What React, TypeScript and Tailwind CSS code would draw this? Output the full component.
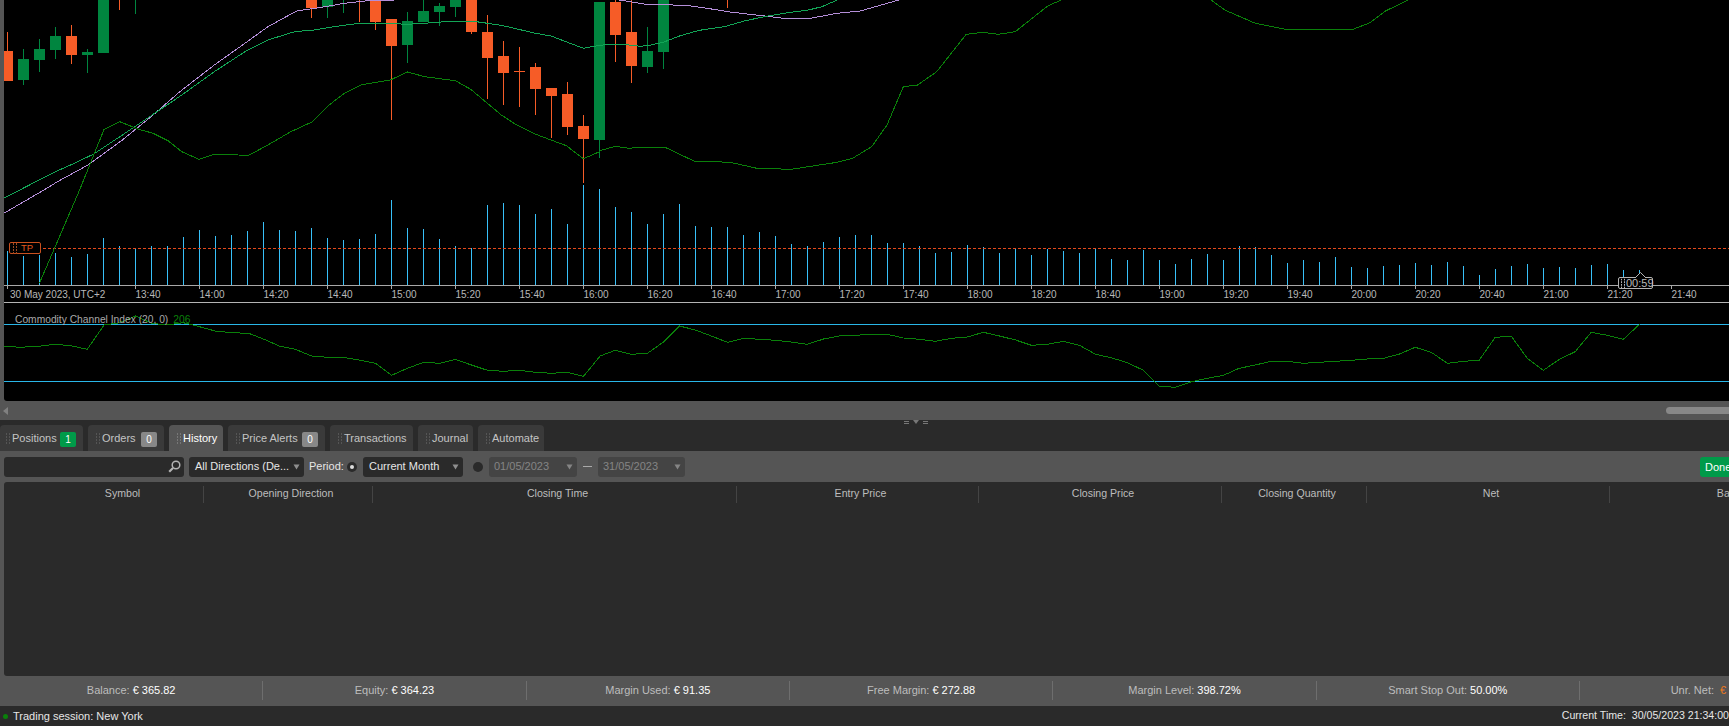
// cTrader style chart + history panel
const SX = 1568 / 600;

// traced from the picture: [x, y] in crop coordinates, converted to page px
const trace = (offX: number, offY: number, pts: number[][]) =>
  pts.map(([x, y]) => `${(offX + x / SX).toFixed(1)},${(offY + y / 3).toFixed(1)}`).join(' ');

const maMid = [
  trace(0, 0, [[10,595],[60,565],[145,515],[190,492],[245,462],[320,405],[385,355],[475,285],[560,215],[640,155],[700,120],[770,95],[820,90],[885,78],[940,70],[1005,70],[1065,73],[1130,68],[1175,64],[1245,65],[1310,76],[1400,100],[1440,108],[1490,130],[1525,145],[1567,136]]),
  trace(600, 0, [[0,136],[25,133],[60,133],[105,139],[130,136],[165,127],[210,107],[260,91],[325,80],[380,62],[430,50],[480,40],[545,30],[580,20],[620,0]]),
].join(' ');

const maFast = [
  trace(0, 190, [[10,70],[115,0]]),
  trace(0, 0, [[150,545],[230,495],[320,420],[400,345],[470,275],[560,195],[640,130],[700,80],[775,33],[840,22],[900,10],[960,2],[1030,0],[1260,-12]]),
  trace(600, 0, [[50,0],[80,5],[120,13],[190,15],[220,15],[280,25],[340,36],[430,48],[480,55],[550,55],[620,40],[680,33],[720,20],[780,0]]),
].join(' ');

const band = [
  trace(0, 190, [[103,280],[208,0]]),
  trace(0, 0, [[272,388],[313,365],[360,387],[400,400],[440,423],[475,455],[520,478],[560,463],[650,466],[700,435],[760,395],[815,366],[860,315],[900,280],[945,254],[1020,240],[1065,216],[1110,230],[1190,242],[1230,268],[1310,345],[1350,375],[1400,403],[1480,437],[1525,476],[1567,455]]),
  trace(600, 0, [[0,452],[40,439],[75,445],[105,442],[170,442],[245,483],[340,487],[410,505],[500,508],[620,487],[660,475],[710,440],[750,375],[793,260],[830,255],[880,215],[957,103],[1000,97],[1040,103],[1085,95],[1170,18],[1205,0],[1230,-15]]),
].join(' ');

const bandEnd = trace(1129, 0, [[190,-15],[215,0],[250,30],[330,70],[410,88],[585,88],[630,68],[670,33],[730,0],[760,-12]]);

const cci = [
  trace(0, 190, [[10,468],[50,472],[100,469],[145,463],[185,467],[228,478],[272,405],[313,398],[354,378],[396,400],[437,405],[479,398],[521,410],[562,423],[605,428],[650,430],[690,448],[730,468],[772,478],[814,498],[855,502],[897,502],[939,510],[981,520],[1023,556],[1065,535],[1107,517],[1149,520],[1190,508],[1232,525],[1274,541],[1316,544],[1358,541],[1399,547],[1441,550],[1483,547],[1525,559],[1567,500]]),
  trace(600, 190, [[0,498],[40,481],[82,493],[124,490],[166,456],[208,408],[249,420],[291,438],[333,457],[375,445],[417,448],[458,451],[500,456],[542,463],[584,447],[626,438],[668,436],[710,433],[751,433],[793,444],[835,448],[877,454],[918,445],[960,441],[1002,427],[1044,438],[1086,450],[1127,466],[1169,463],[1211,454],[1253,466],[1295,493],[1336,503],[1378,518],[1420,541],[1462,589]]),
  trace(1129, 190, [[79,589],[121,592],[163,575],[205,565],[247,556],[288,535],[330,525],[372,514],[414,514],[456,520],[498,517],[539,514],[581,511],[623,507],[665,505],[707,492],[748,472],[790,487],[832,520],[874,514],[915,511],[957,442],[999,439],[1041,505],[1083,541],[1125,508],[1166,485],[1208,427],[1250,436],[1292,448],[1334,403]]),
].join(' ');

// i, up?, body top, body bottom, wick top, wick bottom
const candles: [number, boolean, number, number, number, number][] = [
  [0, false, 51, 81, 32, 81],
  [1, true, 59, 80, 49, 85],
  [2, true, 49, 60, 39, 72],
  [3, true, 36, 50, 27, 59],
  [4, false, 36, 55, 25, 64],
  [5, true, 52, 55, 49, 73],
  [6, true, -5, 53, -5, 53],
  [7, false, -20, -10, -5, 10],
  [8, true, -20, -10, -5, 14],
  [19, false, -5, 8, -5, 18],
  [20, true, -5, 7, -5, 18],
  [21, true, -20, -10, -5, 13],
  [22, false, -20, -10, -5, 22],
  [23, false, -5, 22, -5, 30],
  [24, false, 19, 46, 19, 120],
  [25, true, 21, 45, 12, 63],
  [26, true, 11, 22, -5, 22],
  [27, true, 6, 12, 3, 26],
  [28, true, -5, 7, -5, 17],
  [29, false, -5, 32, -5, 34],
  [30, false, 32, 58, 15, 99],
  [31, false, 56, 73, 41, 105],
  [32, false, 71, 72, 47, 107],
  [33, false, 67, 89, 63, 115],
  [34, false, 88, 96, 88, 138],
  [35, false, 94, 127, 82, 135],
  [36, false, 126, 139, 115, 183],
  [37, true, 2, 140, 2, 158],
  [38, false, 2, 35, -5, 62],
  [39, false, 32, 66, -5, 83],
  [40, true, 51, 67, 27, 73],
  [41, true, -5, 52, -5, 69],
  [45, false, -20, -10, -5, 8],
];

// volume bar tops, 3x px above y=190
const volumes = [183,198,195,190,201,192,144,168,175,168,168,141,120,138,135,123,96,120,123,114,144,150,147,132,30,114,117,147,168,175,45,39,45,72,57,102,-15,-3,51,66,102,72,42,108,111,111,135,126,138,162,168,156,141,135,135,159,159,168,189,186,165,171,189,175,195,177,183,189,175,207,210,180,210,222,207,192,210,168,171,195,219,210,216,201,231,234,228,225,219,225,216,228,255,237,228,222,234,231,234,225,222,240,240];

const hours = ['13:40','14:00','14:20','14:40','15:00','15:20','15:40','16:00','16:20','16:40','17:00','17:20','17:40','18:00','18:20','18:40','19:00','19:20','19:40','20:00','20:20','20:40','21:00','21:20','21:40'];

function Grip({ color = '#5f5f5f', className = '' }: { color?: string; className?: string }) {
  return (
    <svg width="4" height="11" viewBox="0 0 4 11" className={`shrink-0 ${className}`}>
      {[0, 1, 2, 3].map(r => (
        <g key={r} fill={color}>
          <rect x="0" y={r * 3} width="1" height="2" />
          <rect x="3" y={r * 3} width="1" height="2" />
        </g>
      ))}
    </svg>
  );
}

function Chart() {
  return (
    <svg viewBox="4 0 1725 401" width="1725" height="401" className="block">
      {/* CCI levels */}
      <g shapeRendering="crispEdges">
        <rect x="4" y="324" width="1725" height="1" fill="#29b6e8" />
        <rect x="4" y="381" width="1725" height="1" fill="#29b6e8" />
        {volumes.map((top, i) => (
          <rect key={i} x={7 + i * 16} y={190 + top / 3} width="1" height={285 - (190 + top / 3)} fill="#38c0f8" />
        ))}
        <line x1="43" y1="248.5" x2="1729" y2="248.5" stroke="#e2491c" strokeDasharray="3 2" />
        {candles.map(([i, up, top, bottom, wt, wb]) => {
          const x = 7 + i * 16;
          const fill = up ? '#00853f' : '#f65c27';
          return (
            <g key={i} fill={fill}>
              <rect x={x} y={wt} width="1" height={wb - wt} />
              <rect x={x - 5} y={top} width="11" height={bottom - top} />
            </g>
          );
        })}
        <polyline points={maFast} fill="none" stroke="#b48ed8" />
        <polyline points={maMid} fill="none" stroke="#12a556" />
        <polyline points={band} fill="none" stroke="#0a800a" />
        <polyline points={bandEnd} fill="none" stroke="#0a800a" />
        <polyline points={cci} fill="none" stroke="#0a800a" />
        {/* time axis */}
        <rect x="4" y="285" width="1725" height="1" fill="#a8a8a8" />
        <rect x="4" y="302" width="1725" height="1" fill="#b4b4b4" />
        <rect x="7" y="285" width="1" height="4" fill="#a8a8a8" />
        {hours.map((_, i) => (
          <rect key={i} x={135 + i * 64} y="285" width="1" height="4" fill="#a8a8a8" />
        ))}
      </g>
      <g fontSize="10" fill="#b8b8b8">
        <text x="10" y="298">30 May 2023, UTC+2</text>
        {hours.map((h, i) => (
          <text key={h} x={135.5 + i * 64} y="298">{h}</text>
        ))}
      </g>
    </svg>
  );
}

function ChartOverlays() {
  return (
    <>
      <div className="absolute left-[5px] top-[242px] w-[32px] h-[12px] flex items-center gap-[4px] pl-[3px] border border-[#c9501f] rounded-[2px] text-[9.5px] leading-none text-[#e2591f]">
        <Grip color="#a04a20" />
        <span>TP</span>
      </div>
      <div className="absolute left-[11px] top-[313px] flex gap-[5px] text-[10.25px] leading-[14px] text-[#a8a8a8] whitespace-nowrap">
        <span>Commodity Channel Index (20, 0)</span>
        <span className="text-[#0a800a]">206</span>
      </div>
      <div className="absolute left-[1614px] top-[277px] w-[35px] h-[12px] flex items-center gap-[1px] pl-[2px] bg-black border border-[#b4b4b4] rounded-[2px] text-[11px] leading-none text-[#b8b8b8]">
        <Grip color="#b4b4b4" className="scale-y-90" />
        <span>00:59</span>
        <svg width="11" height="6" viewBox="0 0 11 6" className="absolute left-[16px] -top-[6px]">
          <path d="M0 6 L5.5 0.5 L11 6" fill="#000" stroke="#b4b4b4" />
        </svg>
      </div>
    </>
  );
}

function Tab({ label, badge, badgeClass, active, className = 'pl-[8px]' }: { label: string; badge?: string; badgeClass?: string; active?: boolean; className?: string }) {
  return (
    <div className={`h-[26px] shrink-0 flex items-center rounded-t-[4px] ${active ? 'bg-[#555] text-white' : 'bg-[#3a3a3a] text-[#c4c4c4]'} ${className}`}>
      <Grip color={active ? '#777' : '#555'} className="mr-[2px]" />
      <span className="whitespace-nowrap">{label}</span>
      {badge && (
        <span className={`ml-auto mr-[7px] w-[16px] h-[15px] mt-[2px] rounded-[2px] flex items-center justify-center text-[10px] text-white ${badgeClass}`}>{badge}</span>
      )}
    </div>
  );
}

function Arrow({ color = '#8f8f8f' }: { color?: string }) {
  return (
    <svg width="7" height="6" viewBox="0 0 7 6" className="shrink-0">
      <path d="M0.5 0.5 H6.5 L3.5 5.5 Z" fill={color} />
    </svg>
  );
}

function Select({ label, className, disabled }: { label: string; className: string; disabled?: boolean }) {
  return (
    <div className={`h-[20px] shrink-0 flex items-center justify-between pr-[4px] rounded-[3px] ${disabled ? 'pl-[5px] bg-[#444] text-[#858585]' : 'pl-[6px] bg-[#2a2a2a] text-[#e6e6e6]'} ${className}`}>
      <span className="whitespace-nowrap">{label}</span>
      <Arrow color={disabled ? '#858585' : '#8f8f8f'} />
    </div>
  );
}

const columns: [string, string][] = [
  ['Symbol', 'w-[200px] pl-[38px]'],
  ['Opening Direction', 'w-[169px] pl-[6px]'],
  ['Closing Time', 'w-[364px] pl-[6px]'],
  ['Entry Price', 'w-[242px] pl-[6px]'],
  ['Closing Price', 'w-[243px] pl-[6px]'],
  ['Closing Quantity', 'w-[145px] pl-[6px]'],
  ['Net', 'w-[243px] pl-[6px]'],
  ['Balance', 'w-[246px] pl-[6px]'],
];

const summary: [string, string][] = [
  ['Balance:', '€ 365.82'],
  ['Equity:', '€ 364.23'],
  ['Margin Used:', '€ 91.35'],
  ['Free Margin:', '€ 272.88'],
  ['Margin Level:', '398.72%'],
  ['Smart Stop Out:', '50.00%'],
];

export default function App() {
  return (
    <div className="w-[1729px] h-[726px] overflow-hidden flex flex-col bg-[#555] text-[11px] font-['Liberation_Sans',Arial,sans-serif]">
      {/* chart */}
      <div className="h-[401px] shrink-0 pl-[4px]">
        <div className="relative h-full bg-black rounded-bl-[3px] overflow-hidden">
          <Chart />
          <ChartOverlays />
        </div>
      </div>

      {/* horizontal scroll */}
      <div className="h-[19px] shrink-0 flex items-center justify-between pl-[3px]">
        <svg width="5" height="8" viewBox="0 0 5 8"><path d="M5 0 V8 L0 4 Z" fill="#808080" /></svg>
        <div className="w-[63px] h-[7px] rounded-l-full bg-[#888]" />
      </div>

      {/* tabs */}
      <div className="relative h-[31px] shrink-0 bg-[#2a2a2a] flex items-end gap-[5px]">
        <Tab label="Positions" badge="1" badgeClass="bg-[#009a49]" className="w-[83px] pl-[6px]" />
        <Tab label="Orders" badge="0" badgeClass="bg-[#888]" className="w-[76px] pl-[8px]" />
        <Tab label="History" active className="w-[54px] pl-[8px]" />
        <Tab label="Price Alerts" badge="0" badgeClass="bg-[#888]" className="w-[97px] pl-[8px]" />
        <Tab label="Transactions" className="w-[83px] pl-[8px]" />
        <Tab label="Journal" className="w-[55px] pl-[8px]" />
        <Tab label="Automate" className="w-[66px] pl-[8px]" />
        <div className="absolute left-[904px] top-0 w-[24px] h-[4px] flex items-center justify-between">
          <span className="w-[5px] h-[3px] border-y border-[#777]" />
          <svg width="6" height="4" viewBox="0 0 6 4"><path d="M0 0 H6 L3 4 Z" fill="#777" /></svg>
          <span className="w-[5px] h-[3px] border-y border-[#777]" />
        </div>
      </div>

      {/* filters */}
      <div className="h-[31px] shrink-0 flex items-center pl-[4px] text-[11px]">
        <div className="w-[180px] h-[20px] shrink-0 flex items-center justify-end pr-[3px] rounded-[3px] bg-[#2a2a2a]">
          <svg width="13" height="13" viewBox="0 0 13 13" fill="none" stroke="#b4b4b4">
            <circle cx="8" cy="5" r="3.8" strokeWidth="1.5" />
            <path d="M5 8 L1.2 11.8" strokeWidth="2.2" />
          </svg>
        </div>
        <Select label="All Directions (De..." className="w-[115px] ml-[5px]" />
        <span className="ml-[5px] w-[32px] shrink-0 whitespace-nowrap text-[#e6e6e6]">Period:</span>
        <div className="ml-[6px] w-[10px] h-[10px] shrink-0 rounded-full bg-[#2a2a2a] flex items-center justify-center">
          <div className="w-[4px] h-[4px] rounded-full bg-[#ddd]" />
        </div>
        <Select label="Current Month" className="w-[100px] ml-[6px]" />
        <div className="ml-[10px] w-[10px] h-[10px] shrink-0 rounded-full bg-[#2a2a2a]" />
        <Select label="01/05/2023" disabled className="w-[88px] ml-[6px]" />
        <span className="w-[9px] ml-[6px] mr-[6px] shrink-0 border-t border-[#aaa]" />
        <Select label="31/05/2023" disabled className="w-[87px]" />
        <div className="ml-auto w-[29px] h-[20px] overflow-hidden rounded-l-[3px] bg-[#009a49] pl-[5px] leading-[20px] text-white">
          <span>Done</span>
        </div>
      </div>

      {/* table */}
      <div className="h-[194px] shrink-0 ml-[4px] overflow-hidden rounded-l-[3px] bg-[#2a2a2a]">
        <div className="h-[24px] flex items-center text-[10.6px] text-[#bdbdbd]">
          {columns.map(([name, width]) => (
            <div key={name} className={`${width} h-[17px] shrink-0 flex items-center justify-center border-r border-[#444] last:border-r-0 whitespace-nowrap`}>
              {name}
            </div>
          ))}
        </div>
      </div>

      {/* account summary */}
      <div className="h-[30px] shrink-0 flex items-center overflow-hidden pb-[2px]">
        {summary.map(([label, value]) => (
          <div key={label} className="w-[263.33px] h-[19px] shrink-0 flex items-center justify-center gap-[3px] border-r border-[#6e6e6e] text-[#bdbdbd] whitespace-nowrap">
            <span>{label}</span>
            <span className="text-white">{value}</span>
          </div>
        ))}
        <div className="w-[263px] h-[19px] shrink-0 flex items-center justify-center gap-[6px] pl-[2px] text-[#bdbdbd] whitespace-nowrap">
          <span>Unr. Net:</span>
          <span className="text-[#f07a1c]">€ -1.59</span>
        </div>
      </div>

      {/* status */}
      <div className="h-[20px] shrink-0 flex items-center justify-between bg-[#2a2a2a] text-[#e6e6e6]">
        <div className="flex items-center pl-[3px]">
          <span className="w-[5px] h-[5px] rounded-full bg-[#0a800a]" />
          <span className="ml-[5px]">Trading session: New York</span>
        </div>
        <span className="whitespace-pre text-[10.6px]">Current Time:  30/05/2023 21:34:00</span>
      </div>
    </div>
  );
}
